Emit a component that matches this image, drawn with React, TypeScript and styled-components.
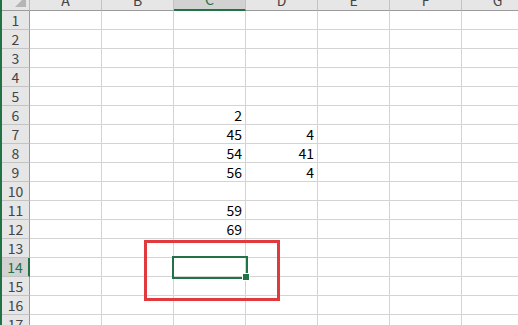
import { createGlobalStyle, styled } from 'styled-components';

const COLS = ['A', 'B', 'C', 'D', 'E', 'F', 'G'];
const ROW_COUNT = 17;
const ACTIVE_COL = 'C';
const ACTIVE_ROW = 14;

const values: Record<string, string> = {
  C6: '2',
  C7: '45',
  D7: '4',
  C8: '54',
  D8: '41',
  C9: '56',
  D9: '4',
  C11: '59',
  C12: '69',
};

const GlobalStyle = createGlobalStyle`
  html, body {
    margin: 0;
    padding: 0;
    background: #ffffff;
    overflow: hidden;
  }
  body {
    font-family: "Noto Sans CJK SC", "Liberation Sans", sans-serif;
  }
`;

export default function App() {
  return (
    <>
      <GlobalStyle />
      <Sheet>
        <Grid>
          <Corner>
            <CornerMark />
          </Corner>
          {COLS.map((c) => (
            <ColHeader key={c} active={c === ACTIVE_COL}>
              {c}
            </ColHeader>
          ))}
          {Array.from({ length: ROW_COUNT }, (_, i) => i + 1).map((r) => (
            <Row key={r}>
              <RowHeader active={r === ACTIVE_ROW}>{r}</RowHeader>
              {COLS.map((c) => {
                const active = c === ACTIVE_COL && r === ACTIVE_ROW;
                return (
                  <Cell key={c} active={active}>
                    {values[`${c}${r}`]}
                    {active && <FillHandle />}
                  </Cell>
                );
              })}
            </Row>
          ))}
        </Grid>
        <Highlight />
      </Sheet>
    </>
  );
}

const Sheet = styled.div`
  position: relative;
  width: 518px;
  height: 325px;
  overflow: hidden;
  background: #ffffff;
  border-left: 2px solid #217346;
  box-sizing: border-box;
`;

const Grid = styled.div`
  display: grid;
  grid-template-columns: 28px repeat(7, 72px);
  grid-auto-rows: 19px;
  grid-template-rows: 21px;
  margin-top: -10px;
  width: max-content;
`;

const Row = styled.div`
  display: contents;
`;

const Corner = styled.div`
  position: relative;
  background: #e6e6e6;
  border-right: 1px solid #bcbcbc;
  border-bottom: 1px solid #9b9b9b;
  box-sizing: border-box;
`;

const CornerMark = styled.div`
  position: absolute;
  right: 3px;
  bottom: 3px;
  width: 0;
  height: 0;
  border-left: 11px solid transparent;
  border-bottom: 11px solid #b5b5b5;
`;

const ColHeader = styled.div<{ active: boolean }>`
  display: flex;
  align-items: flex-end;
  justify-content: center;
  padding-bottom: 1px;
  box-sizing: border-box;
  background: ${({ active }) => (active ? '#d2d2d2' : '#e6e6e6')};
  border-right: 1px solid #c3c3c3;
  border-bottom: ${({ active }) => (active ? '2px solid #217346' : '1px solid #9b9b9b')};
  color: ${({ active }) => (active ? '#217346' : '#444444')};
  font-size: 14px;
  line-height: 18px;
`;

const RowHeader = styled.div<{ active: boolean }>`
  display: flex;
  align-items: center;
  justify-content: center;
  box-sizing: border-box;
  background: ${({ active }) => (active ? '#d2d2d2' : '#e6e6e6')};
  border-right: ${({ active }) => (active ? '2px solid #217346' : '1px solid #9b9b9b')};
  border-bottom: 1px solid #c3c3c3;
  color: ${({ active }) => (active ? '#217346' : '#444444')};
  font-size: 14px;
  line-height: 18px;
`;

const Cell = styled.div<{ active: boolean }>`
  position: relative;
  z-index: ${({ active }) => (active ? 1 : 0)};
  display: flex;
  align-items: flex-end;
  justify-content: flex-end;
  box-sizing: border-box;
  padding: 0 3px 0 0;
  border-right: 1px solid #d4d4d4;
  border-bottom: 1px solid #d4d4d4;
  outline: ${({ active }) => (active ? '2px solid #217346' : 'none')};
  outline-offset: 0;
  color: #000000;
  font-size: 14px;
  line-height: 18px;
`;

const FillHandle = styled.span`
  position: absolute;
  right: -5px;
  bottom: -5px;
  width: 6px;
  height: 6px;
  background: #217346;
  border: 1px solid #ffffff;
`;

const Highlight = styled.div`
  position: absolute;
  left: 142px;
  top: 240px;
  width: 136px;
  height: 61px;
  border: 3px solid #e0393e;
  box-sizing: border-box;
`;
